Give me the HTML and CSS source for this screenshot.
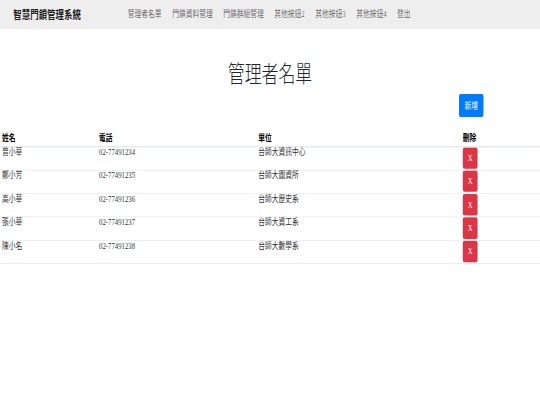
FILE: index.html
```html
<!DOCTYPE html>
<html lang="zh-Hant">
<head>
<meta charset="utf-8">
<title>管理者名單</title>
<link rel="stylesheet" href="styles.css">
</head>
<body>
<div class="viewport">
<div class="page">
  <nav class="navbar">
    <a class="brand" href="#">智慧門鎖管理系統</a>
    <div class="nav">
      <a href="#">管理者名單</a>
      <a href="#">門鎖資料管理</a>
      <a href="#">門鎖群組管理</a>
      <a href="#">其他按鈕2</a>
      <a href="#">其他按鈕3</a>
      <a href="#">其他按鈕4</a>
      <a href="#">登出</a>
    </div>
  </nav>
  <main>
    <h1 class="title">管理者名單</h1>
    <div class="toolbar">
      <button class="btn btn-add" type="button">新增</button>
    </div>
    <table class="list">
      <colgroup>
        <col class="c-name"><col class="c-phone"><col class="c-unit"><col class="c-del">
      </colgroup>
      <thead>
        <tr><th>姓名</th><th>電話</th><th>單位</th><th>刪除</th></tr>
      </thead>
      <tbody>
        <tr><td>曾小華</td><td>02-77491234</td><td>台師大資訊中心</td><td><button class="btn btn-del" type="button">X</button></td></tr>
        <tr><td>鄭小芳</td><td>02-77491235</td><td>台師大圖資所</td><td><button class="btn btn-del" type="button">X</button></td></tr>
        <tr><td>高小華</td><td>02-77491236</td><td>台師大歷史系</td><td><button class="btn btn-del" type="button">X</button></td></tr>
        <tr><td>張小華</td><td>02-77491237</td><td>台師大資工系</td><td><button class="btn btn-del" type="button">X</button></td></tr>
        <tr><td>陳小名</td><td>02-77491238</td><td>台師大數學系</td><td><button class="btn btn-del" type="button">X</button></td></tr>
      </tbody>
    </table>
  </main>
</div>
</div>
</body>
</html>
```

FILE: styles.css
```css
html, body {
  margin: 0;
  padding: 0;
  background: #fff;
  overflow: hidden;
}
.viewport {
  width: 540px;
  height: 405px;
  overflow: hidden;
}
.page {
  width: 1280px;
  height: 720px;
  transform: scale(0.421875, 0.5625);
  transform-origin: 0 0;
  font-family: "Liberation Serif", "Noto Sans CJK TC", serif;
  font-size: 16px;
  line-height: 1.5;
  color: #212529;
}
.navbar {
  height: 52px;
  background: #eeeeee;
  display: flex;
  align-items: center;
  padding-left: 31.6px;
}
.brand {
  font-size: 20px;
  font-weight: bold;
  color: rgba(0, 0, 0, 0.9);
  text-decoration: none;
}
.nav {
  display: flex;
  margin-left: 99px;
}
.nav a {
  padding: 0 12.5px;
  color: rgba(0, 0, 0, 0.6);
  text-decoration: none;
}
.title {
  margin: 52px 0 0;
  text-align: center;
  font-family: "Noto Sans CJK TC", sans-serif;
  font-size: 40px;
  font-weight: 300;
  line-height: 48px;
  color: #212529;
}
.toolbar {
  display: flex;
  justify-content: flex-end;
  padding-right: 134px;
  margin-top: 14.5px;
}
.btn {
  border: 0;
  border-radius: 4px;
  color: #fff;
  font-family: "Liberation Serif", "Noto Sans CJK TC", serif;
  font-size: 16px;
  cursor: pointer;
}
.btn-add {
  background: #007bff;
  height: 41.5px;
  padding: 0 13px;
  line-height: 41.5px;
}
.list {
  width: 1280px;
  margin-top: 27.5px;
  border-collapse: collapse;
  table-layout: fixed;
}
.c-name { width: 230px; }
.c-phone { width: 377.5px; }
.c-unit { width: 484.5px; }
.c-del { width: 188px; }
.list th {
  text-align: left;
  font-weight: bold;
  color: #000;
  height: 18px;
  line-height: 18px;
  padding: 0 4.8px 6px;
  border-bottom: 2px solid #dee2e6;
}
.list td {
  vertical-align: top;
  height: 40.6px;
  line-height: 18px;
  padding: 0 4.8px;
  border-bottom: 1px solid #dee2e6;
  color: #333;
}
.btn-del {
  display: block;
  background: #dc3545;
  height: 38.4px;
  padding: 0 12px;
  line-height: 38.4px;
}
```
